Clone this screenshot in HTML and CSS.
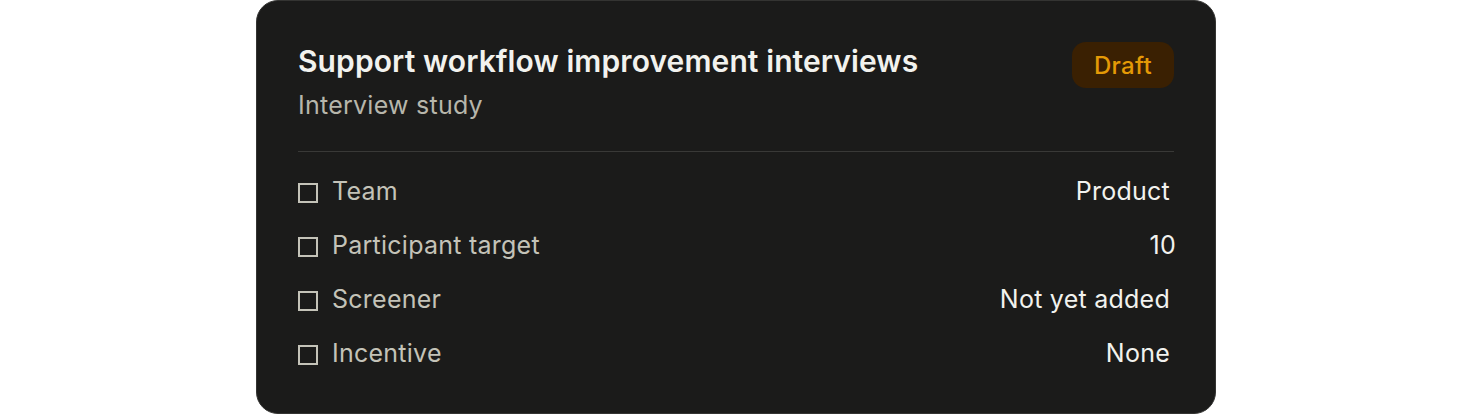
FILE: index.html
```html
<!DOCTYPE html>
<html lang="en">
<head>
<meta charset="utf-8">
<title>Study card</title>
<link rel="stylesheet" href="styles.css">
</head>
<body>
<main class="page">
  <section class="card">
    <header class="card-head">
      <div class="titles">
        <h1 class="title">Support workflow improvement interviews</h1>
        <p class="subtitle">Interview study</p>
      </div>
      <span class="badge">Draft</span>
    </header>
    <ul class="rows">
      <li class="row"><span class="label"><span class="box"></span>Team</span><span class="value">Product</span></li>
      <li class="row"><span class="label"><span class="box"></span>Participant target</span><span class="value value-num">10</span></li>
      <li class="row"><span class="label"><span class="box"></span>Screener</span><span class="value">Not yet added</span></li>
      <li class="row"><span class="label"><span class="box"></span>Incentive</span><span class="value">None</span></li>
    </ul>
  </section>
</main>
</body>
</html>
```

FILE: styles.css
```css
* { box-sizing: border-box; }
html, body { margin: 0; padding: 0; background: #ffffff; }
body { font-family: Inter, "Noto Sans", "Liberation Sans", sans-serif; }
.page { display: flex; justify-content: center; padding-top: 0; }
.card {
  width: 960px;
  height: 414px;
  background: #1b1b1a;
  border: 1px solid #343432;
  border-radius: 22px;
  padding: 41px 41px 40px 41px;
  display: flex;
  flex-direction: column;
}
.card-head {
  display: flex;
  justify-content: space-between;
  align-items: flex-start;
  padding-bottom: 31px;
  border-bottom: 1px solid #393937;
}
.titles { display: flex; flex-direction: column; gap: 10px; }
.title {
  margin: 0;
  font-size: 30px;
  line-height: 38px;
  font-weight: 600;
  color: #f2f2ee;
  letter-spacing: 0.1px;
}
.subtitle {
  margin: 0;
  font-size: 25px;
  line-height: 30px;
  color: #b7b6ab;
  letter-spacing: 0.25px;
}
.badge {
  margin-top: 0;
  height: 46px;
  padding: 0 22px;
  display: flex;
  align-items: center;
  border-radius: 14px;
  background: #3a2002;
  color: #e49a06;
  font-size: 24px;
  font-weight: 500;
  letter-spacing: 0.3px;
}
.rows {
  list-style: none;
  margin: 0;
  padding: 12px 0 0 0;
  display: flex;
  flex-direction: column;
}
.row {
  height: 54px;
  display: flex;
  justify-content: space-between;
  align-items: center;
  font-size: 25px;
  letter-spacing: 0.25px;
}
.label {
  display: flex;
  align-items: center;
  gap: 14px;
  color: #c4c3b8;
}
.box {
  width: 20px;
  height: 20px;
  border: 2px solid #c4c3b8;
  margin-top: 3px;
}
.value { color: #f2f2ee; padding-right: 4px; }
.value-num { padding-right: 0; margin-right: -2px; }
```
